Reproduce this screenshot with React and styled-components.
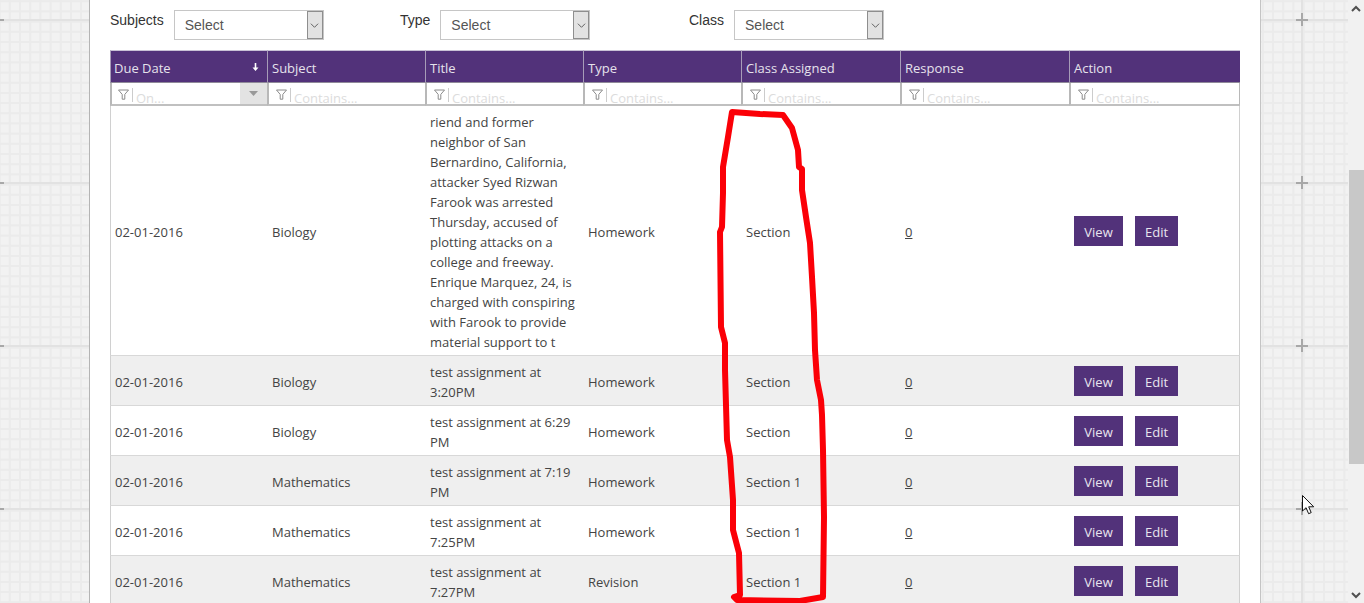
import React from "react";
import styled, { createGlobalStyle } from "styled-components";

const PURPLE = "#52327a";

// one 163px square of the graph paper backdrop, plus sign in the middle
const fineLines = Array.from({ length: 16 }, (_, i) => {
  const p = 1 + i * 10.2;
  return `<rect x="${p}" y="0" width="2" height="163" fill="#ebebeb"/><rect x="0" y="${p}" width="163" height="2" fill="#ebebeb"/>`;
}).join("");
const tile = `<svg xmlns="http://www.w3.org/2000/svg" width="163" height="163"><rect width="163" height="163" fill="#f2f2f2"/>${fineLines}<rect x="81" width="2" height="163" fill="#e2e2e2"/><rect y="81" width="163" height="2" fill="#e2e2e2"/><rect x="76" y="81" width="12" height="2" fill="#a8a8a8"/><rect x="81" y="75" width="2" height="13" fill="#a8a8a8"/></svg>`;
const tileUrl = `url("data:image/svg+xml,${encodeURIComponent(tile)}")`;

const GlobalStyle = createGlobalStyle`
  html, body {
    margin: 0;
    padding: 0;
    height: 603px;
    overflow: hidden;
    background: #fff;
  }
`;

const Page = styled.div`
  position: relative;
  display: flex;
  height: 603px;
  overflow: hidden;
  font-family: "Open Sans", "Liberation Sans", sans-serif;
  font-size: 13px;
  color: #444;
`;

const Backdrop = styled.div`
  flex: 1;
  height: 603px;
  padding-left: 89px;
  box-sizing: border-box;
  background-image: ${tileUrl};
  background-position: 79px -62px;
`;

const Panel = styled.main`
  width: 1172px;
  height: 603px;
  box-sizing: border-box;
  padding: 10px 20px 0;
  background: #fff;
  border-left: 1px solid #b4b4b4;
  border-right: 1px solid #c4c4c4;
`;

const FilterBar = styled.div`
  display: grid;
  grid-template-columns: 290px 289px 1fr;
  height: 40px;
`;

const FilterGroup = styled.div`
  display: flex;
  align-items: flex-start;
  gap: 10px;
`;

const FilterLabel = styled.label`
  font-family: "Liberation Sans", Arial, sans-serif;
  font-size: 14px;
  line-height: 20px;
  color: #333;
`;

const SelectBox = styled.div`
  display: flex;
  width: 150px;
  height: 30px;
  box-sizing: border-box;
  border: 1px solid #c6c6c6;
  background: #fff;
`;

const SelectText = styled.span`
  flex: 1;
  padding-left: 10px;
  font-family: "Liberation Sans", Arial, sans-serif;
  font-size: 14px;
  line-height: 28px;
  color: #555;
`;

const SelectArrow = styled.span`
  display: flex;
  align-items: center;
  justify-content: center;
  width: 16px;
  box-sizing: border-box;
  background: #e2e2e2;
  border: 1px solid #8e8e8e;
`;

const Grid = styled.table`
  width: 1130px;
  table-layout: fixed;
  border-collapse: separate;
  border-spacing: 0;
`;

const HeadCell = styled.th`
  position: relative;
  height: 33px;
  box-sizing: border-box;
  padding: 3px 4px 0;
  padding-left: ${({ $first }) => ($first ? "3px" : "4px")};
  background: ${PURPLE};
  border-top: 1px solid #c9c2d6;
  border-left: 1px solid #a79cb8;
  border-bottom: 1px solid #8f8a99;
  text-align: left;
  font-weight: 400;
  font-size: 13px;
  color: #e6e2ec;
`;

const SortMark = styled.span`
  position: absolute;
  right: 8px;
  top: 11px;
  display: flex;
`;

const SearchCell = styled.td`
  height: 23px;
  box-sizing: border-box;
  padding: 0;
  background: #fff;
  border-left: 2px solid #b8b8b8;
  border-bottom: 2px solid #c0c0c0;
  border-right: ${({ $last }) => ($last ? "1px solid #b8b8b8" : "0")};
`;

const SearchInner = styled.div`
  display: flex;
  align-items: flex-start;
  height: 21px;
  padding-left: ${({ $first }) => ($first ? "6px" : "7px")};
`;

const FunnelMark = styled.span`
  display: flex;
  align-items: flex-start;
  padding: 1px 3px 0 0;
  margin: 5px 3px 0 0;
  height: 13px;
  border-right: 1px solid #ccc;
`;

const Placeholder = styled.span`
  flex: 1;
  font-size: 13px;
  line-height: 15px;
  color: #dcdcdc;
  margin-top: 8px;
`;

const DateButton = styled.span`
  display: flex;
  align-items: center;
  justify-content: center;
  width: 27px;
  height: 21px;
  background: #e3e3e3;
`;

const Row = styled.tr`
  background: ${({ $alt }) => ($alt ? "#efefef" : "#fff")};
`;

const Cell = styled.td`
  box-sizing: border-box;
  padding: 6px 5px 3px;
  line-height: 20px;
  vertical-align: middle;
  white-space: pre-line;
  border-bottom: 1px solid #d8d8d8;
  border-left: ${({ $first }) => ($first ? "1px solid #d0d0d0" : "0")};
  border-right: ${({ $last }) => ($last ? "1px solid #d0d0d0" : "0")};
  padding-left: ${({ $first }) => ($first ? "4px" : "5px")};
`;

const ActionCell = styled(Cell)`
  padding-top: 5px;
  padding-bottom: 4px;
`;

const ResponseLink = styled.a`
  color: #444;
  text-decoration: underline;
`;

const Actions = styled.div`
  display: flex;
  gap: 12px;
`;

const ActionButton = styled.button`
  height: 30px;
  padding: 2px 0 0;
  width: ${({ $w }) => $w}px;
  border: 0;
  background: ${PURPLE};
  color: #e8e4ee;
  font-family: "Open Sans", "Liberation Sans", sans-serif;
  font-size: 13px;
`;

const ScrollBar = styled.div`
  display: flex;
  flex-direction: column;
  width: 16px;
  height: 603px;
  background: #f1f1f1;
`;

const ScrollArrow = styled.span`
  display: flex;
  justify-content: center;
  align-items: center;
  height: 17px;
  margin-top: ${({ $down }) => ($down ? "auto" : "0")};
`;

const ScrollThumb = styled.span`
  display: block;
  height: 294px;
  margin: 153px 0 0 1px;
  background: #c8c8c8;
`;

const Scribble = styled.svg`
  position: absolute;
  left: 0;
  top: 0;
  pointer-events: none;
`;

const Pointer = styled.svg`
  position: absolute;
  left: 1302px;
  top: 495px;
`;

const columns = ["Due Date", "Subject", "Title", "Type", "Class Assigned", "Response", "Action"];
const widths = [157, 158, 158, 158, 159, 169, 171];

const rows = [
  {
    subject: "Biology",
    title:
      "riend and former\nneighbor of San\nBernardino, California,\nattacker Syed Rizwan\nFarook was arrested\nThursday, accused of\nplotting attacks on a\ncollege and freeway.\nEnrique Marquez, 24, is\ncharged with conspiring\nwith Farook to provide\nmaterial support to t",
    type: "Homework",
    cls: "Section",
  },
  { subject: "Biology", title: "test assignment at\n3:20PM", type: "Homework", cls: "Section" },
  { subject: "Biology", title: "test assignment at 6:29\nPM", type: "Homework", cls: "Section" },
  { subject: "Mathematics", title: "test assignment at 7:19\nPM", type: "Homework", cls: "Section 1" },
  { subject: "Mathematics", title: "test assignment at\n7:25PM", type: "Homework", cls: "Section 1" },
  { subject: "Mathematics", title: "test assignment at\n7:27PM", type: "Revision", cls: "Section 1" },
];

const scribblePath =
  "M732 112 L760 114 L783 115 L792 128 L798 150 L799 167 L802 169 L802 190 L806 217 L810 243 L812 277 L814 313 L815 350 L817 380 L821 400 L822 415 L823 450 L824 517 L823 597 L800 601 L737 600 L734 597 L740 595 L739 553 L733 530 L733 500 L730 457 L727 440 L725 370 L725 343 L721 327 L720 232 L722 227 L723 193 L723 167 L728 137 Z";

function Chevron({ up, size = 9, color = "#555", weight = 1 }) {
  return (
    <svg width={size} height={size} viewBox="0 0 10 10" fill="none">
      <path d={up ? "M1 7 5 3l4 4" : "M1 3l4 4 4-4"} stroke={color} strokeWidth={weight} />
    </svg>
  );
}

function Funnel() {
  return (
    <svg width="11" height="11" viewBox="0 0 11 11" fill="none">
      <path d="M.5 1h10L6.8 5.4v4.8H4.2V5.4z" stroke="#8a8a8a" strokeWidth="1" />
    </svg>
  );
}

function SelectFilter({ label }) {
  return (
    <FilterGroup>
      <FilterLabel>{label}</FilterLabel>
      <SelectBox>
        <SelectText>Select</SelectText>
        <SelectArrow>
          <Chevron />
        </SelectArrow>
      </SelectBox>
    </FilterGroup>
  );
}

export default function App() {
  return (
    <>
      <GlobalStyle />
      <Page>
        <Backdrop>
          <Panel>
            <FilterBar>
              <SelectFilter label="Subjects" />
              <SelectFilter label="Type" />
              <SelectFilter label="Class" />
            </FilterBar>
            <Grid>
              <colgroup>
                {widths.map((w, i) => (
                  <col key={i} width={w} />
                ))}
              </colgroup>
              <thead>
                <tr>
                  {columns.map((c, i) => (
                    <HeadCell key={c} $first={i === 0}>
                      {c}
                      {i === 0 && (
                        <SortMark>
                          <svg width="7" height="10" viewBox="0 0 7 10">
                            <path d="M2.7 1h1.6v4.5H6.5L3.5 9 .5 5.5h2.2z" fill="#fff" />
                          </svg>
                        </SortMark>
                      )}
                    </HeadCell>
                  ))}
                </tr>
                <tr>
                  {columns.map((c, i) => (
                    <SearchCell key={c} $last={i === 6}>
                      <SearchInner $first={i === 0}>
                        <FunnelMark>
                          <Funnel />
                        </FunnelMark>
                        <Placeholder>{i === 0 ? "On..." : "Contains..."}</Placeholder>
                        {i === 0 && (
                          <DateButton>
                            <svg width="9" height="5" viewBox="0 0 9 5">
                              <path d="M0 0h9L4.5 5z" fill="#999" />
                            </svg>
                          </DateButton>
                        )}
                      </SearchInner>
                    </SearchCell>
                  ))}
                </tr>
              </thead>
              <tbody>
                {rows.map((r, i) => (
                  <Row key={i} $alt={i % 2 === 1}>
                    <Cell $first>02-01-2016</Cell>
                    <Cell>{r.subject}</Cell>
                    <Cell>{r.title}</Cell>
                    <Cell>{r.type}</Cell>
                    <Cell>{r.cls}</Cell>
                    <Cell>
                      <ResponseLink href="#">0</ResponseLink>
                    </Cell>
                    <ActionCell $last>
                      <Actions>
                        <ActionButton $w={49}>View</ActionButton>
                        <ActionButton $w={43}>Edit</ActionButton>
                      </Actions>
                    </ActionCell>
                  </Row>
                ))}
              </tbody>
            </Grid>
          </Panel>
        </Backdrop>
        <ScrollBar>
          <ScrollArrow>
            <Chevron up size={10} color="#505050" weight={2} />
          </ScrollArrow>
          <ScrollThumb />
          <ScrollArrow $down>
            <Chevron size={10} color="#505050" weight={2} />
          </ScrollArrow>
        </ScrollBar>
        <Scribble width="1364" height="603" viewBox="0 0 1364 603">
          <path d={scribblePath} fill="none" stroke="#fb0007" strokeWidth="6" strokeLinejoin="round" />
        </Scribble>
        <Pointer width="13" height="20" viewBox="0 0 13 20">
          <path d="M.5.5v15.5l3.6-3.3 2.5 6 2.6-1.1-2.5-5.8h5z" fill="#fff" stroke="#111" strokeWidth="1" />
        </Pointer>
      </Page>
    </>
  );
}
